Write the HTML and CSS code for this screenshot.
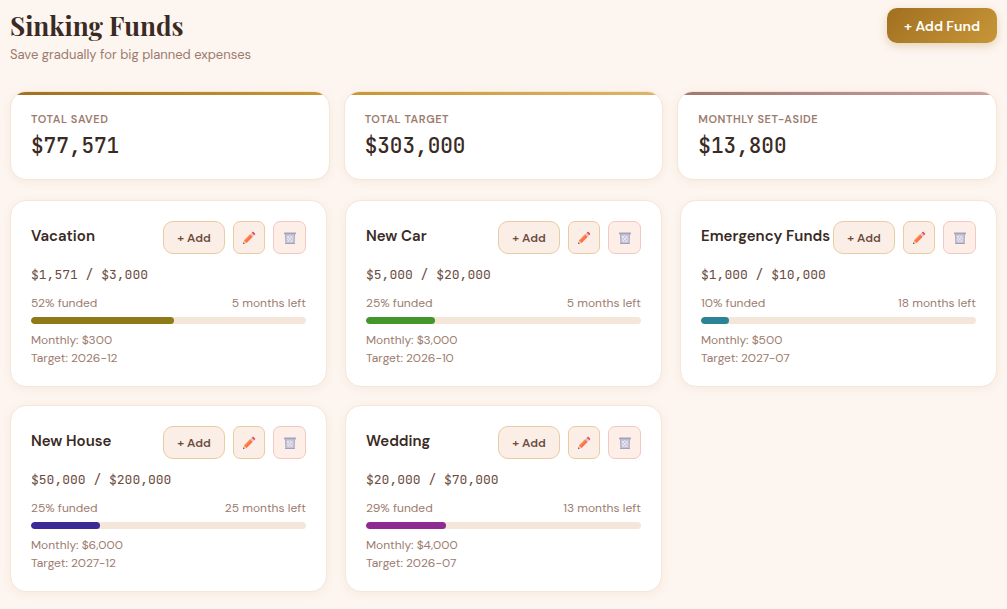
FILE: index.html
```html
<!DOCTYPE html>
<html lang="en">
<head>
    <meta charset="UTF-8">
    <meta name="viewport" content="width=device-width, initial-scale=1.0">
    <title>Sinking Funds</title>
    <link rel="stylesheet" href="styles.css">
</head>
<body>
    <!-- Shared icons -->
    <svg class="sprite" aria-hidden="true">
        <symbol id="icon-edit" viewBox="0 0 14 14">
            <path d="M1 13 L2 9.4 L4.6 12 Z" fill="#efc9a0"/>
            <path d="M1 13 L1.5 11.3 L2.7 12.5 Z" fill="#493642"/>
            <path d="M2 9.4 L8.2 3.2 L10.8 5.8 L4.6 12 Z" fill="#ff7043"/>
            <path d="M2 9.4 L8.2 3.2 L9.1 4.1 L2.9 10.3 Z" fill="#ff9350"/>
            <path d="M8.2 3.2 L9.7 1.7 L12.3 4.3 L10.8 5.8 Z" fill="#c5cbe3"/>
            <path d="M9.7 1.7 L10.4 1 Q11 .5 11.6 1 L13 2.4 Q13.5 3 13 3.6 L12.3 4.3 Z" fill="#f8434f"/>
        </symbol>
        <symbol id="icon-delete" viewBox="0 0 14 14">
            <path d="M2 3 H12 L11.4 12.6 H2.6 Z" fill="#c6c3d4"/>
            <path d="M4 5 L9 10.5 M7 4.5 L10 8 M4 8 L6.5 11 M9.5 5 L4.5 10.5 M6.5 4.5 L4 7.5 M10 8.5 L7.5 11" stroke="#f4f2f8" stroke-width=".8"/>
            <path d="M2.4 3 L3 12.5 M11.6 3 L11 12.5" stroke="#b0aec8" stroke-width="1"/>
            <rect x="1" y="1.4" width="12" height="1.8" rx=".5" fill="#a3a2c2"/>
            <rect x="2" y="11.9" width="10" height="1.2" rx=".4" fill="#a09fbf"/>
        </symbol>
    </svg>

    <header class="page-header">
        <div>
            <h1>Sinking Funds</h1>
            <p class="subtitle">Save gradually for big planned expenses</p>
        </div>
        <button class="btn btn-primary" type="button">+ Add Fund</button>
    </header>

    <section class="summary-grid">
        <div class="card summary-card saved">
            <div class="summary-label">Total Saved</div>
            <div class="summary-value">$77,571</div>
        </div>
        <div class="card summary-card target">
            <div class="summary-label">Total Target</div>
            <div class="summary-value">$303,000</div>
        </div>
        <div class="card summary-card monthly">
            <div class="summary-label">Monthly Set-Aside</div>
            <div class="summary-value">$13,800</div>
        </div>
    </section>

    <main class="fund-grid">
        <article class="card fund-card">
            <div class="fund-header">
                <h2>Vacation</h2>
                <div class="fund-actions">
                    <button class="btn btn-add" type="button">+ Add</button>
                    <button class="btn btn-icon" type="button" aria-label="Edit"><svg><use href="#icon-edit"/></svg></button>
                    <button class="btn btn-icon btn-delete" type="button" aria-label="Delete"><svg><use href="#icon-delete"/></svg></button>
                </div>
            </div>
            <div class="fund-amount">$1,571 / $3,000</div>
            <div class="fund-progress"><span>52% funded</span><span>5 months left</span></div>
            <div class="bar"><div class="bar-fill olive" style="width: 52%"></div></div>
            <p class="fund-meta">Monthly: $300</p>
            <p class="fund-meta">Target: 2026-12</p>
        </article>

        <article class="card fund-card">
            <div class="fund-header">
                <h2>New Car</h2>
                <div class="fund-actions">
                    <button class="btn btn-add" type="button">+ Add</button>
                    <button class="btn btn-icon" type="button" aria-label="Edit"><svg><use href="#icon-edit"/></svg></button>
                    <button class="btn btn-icon btn-delete" type="button" aria-label="Delete"><svg><use href="#icon-delete"/></svg></button>
                </div>
            </div>
            <div class="fund-amount">$5,000 / $20,000</div>
            <div class="fund-progress"><span>25% funded</span><span>5 months left</span></div>
            <div class="bar"><div class="bar-fill green" style="width: 25%"></div></div>
            <p class="fund-meta">Monthly: $3,000</p>
            <p class="fund-meta">Target: 2026-10</p>
        </article>

        <article class="card fund-card">
            <div class="fund-header">
                <h2>Emergency Funds</h2>
                <div class="fund-actions">
                    <button class="btn btn-add" type="button">+ Add</button>
                    <button class="btn btn-icon" type="button" aria-label="Edit"><svg><use href="#icon-edit"/></svg></button>
                    <button class="btn btn-icon btn-delete" type="button" aria-label="Delete"><svg><use href="#icon-delete"/></svg></button>
                </div>
            </div>
            <div class="fund-amount">$1,000 / $10,000</div>
            <div class="fund-progress"><span>10% funded</span><span>18 months left</span></div>
            <div class="bar"><div class="bar-fill teal" style="width: 10%"></div></div>
            <p class="fund-meta">Monthly: $500</p>
            <p class="fund-meta">Target: 2027-07</p>
        </article>

        <article class="card fund-card">
            <div class="fund-header">
                <h2>New House</h2>
                <div class="fund-actions">
                    <button class="btn btn-add" type="button">+ Add</button>
                    <button class="btn btn-icon" type="button" aria-label="Edit"><svg><use href="#icon-edit"/></svg></button>
                    <button class="btn btn-icon btn-delete" type="button" aria-label="Delete"><svg><use href="#icon-delete"/></svg></button>
                </div>
            </div>
            <div class="fund-amount">$50,000 / $200,000</div>
            <div class="fund-progress"><span>25% funded</span><span>25 months left</span></div>
            <div class="bar"><div class="bar-fill indigo" style="width: 25%"></div></div>
            <p class="fund-meta">Monthly: $6,000</p>
            <p class="fund-meta">Target: 2027-12</p>
        </article>

        <article class="card fund-card">
            <div class="fund-header">
                <h2>Wedding</h2>
                <div class="fund-actions">
                    <button class="btn btn-add" type="button">+ Add</button>
                    <button class="btn btn-icon" type="button" aria-label="Edit"><svg><use href="#icon-edit"/></svg></button>
                    <button class="btn btn-icon btn-delete" type="button" aria-label="Delete"><svg><use href="#icon-delete"/></svg></button>
                </div>
            </div>
            <div class="fund-amount">$20,000 / $70,000</div>
            <div class="fund-progress"><span>29% funded</span><span>13 months left</span></div>
            <div class="bar"><div class="bar-fill purple" style="width: 29%"></div></div>
            <p class="fund-meta">Monthly: $4,000</p>
            <p class="fund-meta">Target: 2026-07</p>
        </article>
    </main>
</body>
</html>
```

FILE: styles.css
```css
* {
    margin: 0;
    padding: 0;
    box-sizing: border-box;
}

body {
    font-family: 'DM Sans', Inter, sans-serif;
    background: #fdf5ef;
    color: #3a2a24;
    padding: 8px 10px 16px;
}

.sprite {
    display: none;
}

.page-header {
    display: flex;
    justify-content: space-between;
    align-items: flex-start;
    margin-bottom: 26px;
}

h1 {
    font-family: 'Playfair Display', 'Liberation Serif', serif;
    font-size: 26px;
    font-weight: 700;
    line-height: 35px;
    margin-bottom: 2px;
}

.subtitle {
    font-size: 13px;
    line-height: 20px;
    color: #9c7b6e;
}

.btn {
    font-family: inherit;
    cursor: pointer;
}

.btn-primary {
    height: 35px;
    padding: 0 17px;
    border: none;
    border-radius: 10px;
    background: linear-gradient(135deg, #a07020, #c89638);
    color: #fff;
    font-size: 14px;
    font-weight: 600;
    box-shadow: 0 3px 8px rgba(160, 112, 32, 0.25);
}

.card {
    background: #fff;
    border: 1px solid #f5e6d6;
    border-radius: 16px;
    padding: 20px;
    box-shadow: 0 2px 10px rgba(160, 112, 80, 0.08);
}

.summary-grid {
    display: grid;
    grid-template-columns: repeat(3, 1fr);
    gap: 14px;
    margin-bottom: 20px;
}

.summary-card {
    position: relative;
    overflow: hidden;
    padding: 19px 20px;
}

.summary-card::before {
    content: '';
    position: absolute;
    top: 0;
    left: 0;
    right: 0;
    height: 3px;
}

.summary-card.saved::before {
    background: linear-gradient(90deg, #a07020, #c89638);
}

.summary-card.target::before {
    background: linear-gradient(90deg, #c89638, #dfb468);
}

.summary-card.monthly::before {
    background: linear-gradient(90deg, #a07870, #c9a0a0);
}

.summary-label {
    font-size: 11px;
    font-weight: 600;
    line-height: 16px;
    letter-spacing: 0.05em;
    text-transform: uppercase;
    color: #9c7b6e;
    margin-bottom: 4px;
}

.summary-value {
    font-family: 'JetBrains Mono', 'Liberation Mono', monospace;
    font-size: 21px;
    font-weight: 500;
    line-height: 29px;
}

.fund-grid {
    display: grid;
    grid-template-columns: repeat(3, 1fr);
    gap: 18px;
}

.fund-header {
    display: flex;
    justify-content: space-between;
    align-items: flex-start;
    margin-bottom: 11px;
}

h2 {
    font-size: 15px;
    font-weight: 600;
    line-height: 30px;
    white-space: nowrap;
}

.fund-actions {
    display: flex;
    gap: 8px;
}

.btn-add,
.btn-icon {
    height: 33px;
    border: 1px solid #e8cda0;
    background: #fbeee7;
    color: #6b4c40;
}

.btn-add {
    width: 62px;
    border-radius: 10px;
    font-size: 12px;
    font-weight: 600;
}

.btn-icon {
    display: flex;
    align-items: center;
    justify-content: center;
    width: 32px;
    border-radius: 7px;
}

.btn-icon svg {
    width: 14px;
    height: 14px;
}

.btn-delete {
    width: 33px;
    border-color: #f2c8c2;
    background: #fdeee8;
}

.fund-amount {
    font-family: 'JetBrains Mono', 'Liberation Mono', monospace;
    font-size: 13px;
    line-height: 20px;
    color: #6b4c40;
    margin-bottom: 9px;
}

.fund-progress {
    display: flex;
    justify-content: space-between;
    font-size: 12px;
    line-height: 18px;
    color: #9c7b6e;
    margin-bottom: 5px;
}

.bar {
    height: 7px;
    border-radius: 4px;
    background: #f5e6da;
    overflow: hidden;
    margin-bottom: 7px;
}

.bar-fill {
    height: 100%;
    border-radius: 4px;
}

.olive { background: #8f7a1a; }
.green { background: #42962a; }
.teal { background: #2b8496; }
.indigo { background: #3a2b96; }
.purple { background: #8e2b92; }

.fund-meta {
    font-size: 12px;
    line-height: 18px;
    color: #9c7b6e;
}

.fund-card {
    padding-bottom: 19px;
}

@media (max-width: 800px) {
    .summary-grid,
    .fund-grid {
        grid-template-columns: 1fr;
    }
}
```
